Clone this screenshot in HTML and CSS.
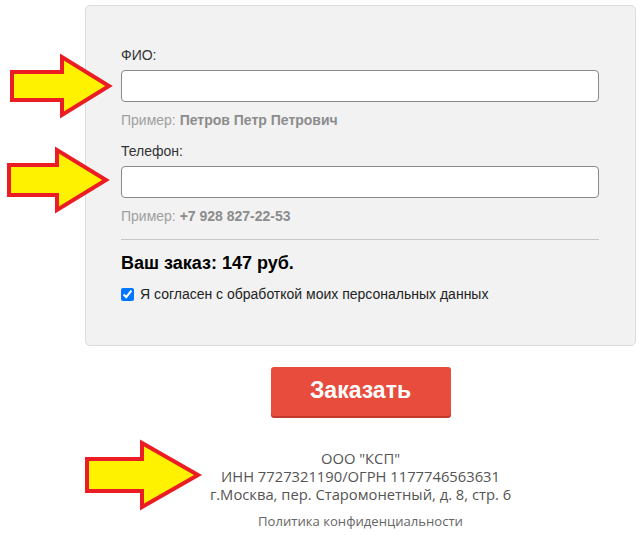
FILE: index.html
```html
<!DOCTYPE html>
<html lang="ru">
<head>
<meta charset="utf-8">
<title>Заказ</title>
<link rel="stylesheet" href="styles.css">
</head>
<body>
<div class="page">
  <form class="card">
    <label class="label" for="fio">ФИО:</label>
    <input class="field" id="fio" type="text">
    <div class="hint">Пример: <b>Петров Петр Петрович</b></div>
    <label class="label label-next" for="tel">Телефон:</label>
    <input class="field" id="tel" type="text">
    <div class="hint">Пример: <b>+7 928 827-22-53</b></div>
    <hr class="sep">
    <div class="total">Ваш заказ: 147 руб.</div>
    <label class="agree"><input type="checkbox" class="check" checked> Я согласен с обработкой моих персональных данных</label>
  </form>
  <div class="actions">
    <button class="order" type="button">Заказать</button>
  </div>
  <div class="company">
    <div>ООО "КСП"</div>
    <div>ИНН 7727321190/ОГРН 1177746563631</div>
    <div>г.Москва, пер. Старомонетный, д. 8, стр. 6</div>
  </div>
  <div class="policy">Политика конфиденциальности</div>
</div>
<svg class="arrows" width="640" height="535" viewBox="0 0 640 535">
  <polygon points="12,72 62,72 62,57 109,86 62,115 62,100 12,100"/>
  <polygon points="9,165 57,165 57,150 106,180 57,210 57,195 9,195"/>
  <polygon points="87,459 142,459 142,443 198,475 142,507 142,491 87,491"/>
</svg>
</body>
</html>
```
FILE: styles.css
```css
html, body {
  margin: 0;
  padding: 0;
  background: #fff;
}
body {
  font-family: "Liberation Sans", Arial, sans-serif;
  color: #333;
  width: 640px;
  height: 535px;
  overflow: hidden;
  position: relative;
}
.page {
  margin-left: 85px;
  width: 551px;
  padding-top: 5px;
}
.card {
  display: flex;
  flex-direction: column;
  background: #f2f2f2;
  border: 1px solid #dcdcdc;
  border-radius: 5px;
  padding: 41px 36px 43px 35px;
}
.label {
  font-size: 14px;
  line-height: 16px;
  color: #333;
  margin-bottom: 7px;
}
.label-next {
  margin-top: 15px;
}
.field {
  box-sizing: border-box;
  width: 478px;
  height: 32px;
  margin: 0;
  border: 1px solid #8a8a8a;
  border-radius: 4px;
  background: #fff;
  padding: 0 8px;
  font: 14px "Liberation Sans", Arial, sans-serif;
}
.hint {
  margin-top: 10px;
  font-size: 14px;
  line-height: 16px;
  color: #a0a0a0;
}
.hint b {
  color: #8c8c8c;
}
.sep {
  width: 478px;
  margin: 15px 0 0 0;
  border: 0;
  border-top: 1px solid #c8c8c8;
  height: 0;
}
.total {
  margin-top: 13px;
  font-size: 18px;
  line-height: 21px;
  font-weight: bold;
  color: #000;
}
.agree {
  margin-top: 12px;
  display: flex;
  align-items: center;
  font-size: 14px;
  line-height: 16px;
  color: #222;
}
.check {
  width: 13px;
  height: 13px;
  margin: 0 6px 0 0;
  accent-color: #0075ff;
}
.actions {
  display: flex;
  justify-content: center;
  margin-top: 21px;
}
.order {
  width: 180px;
  height: 49px;
  border: 0;
  border-radius: 3px;
  background: #e74c3c;
  box-shadow: 0 2px 0 #c0392b;
  color: #fff;
  font: bold 23px "Liberation Sans", Arial, sans-serif;
  padding: 0 0 2px 0;
}
.company {
  margin-top: 33px;
  text-align: center;
  font-family: "Open Sans", "DejaVu Sans", sans-serif;
  font-size: 14.75px;
  line-height: 18px;
  color: #555;
}
.policy {
  margin-top: 10px;
  text-align: center;
  font-family: "Open Sans", "DejaVu Sans", sans-serif;
  font-size: 13.1px;
  line-height: 16px;
  color: #666;
}
.arrows {
  position: absolute;
  left: 0;
  top: 0;
  pointer-events: none;
}
.arrows polygon {
  fill: #fff200;
  stroke: #ec1c24;
  stroke-width: 4;
  stroke-linejoin: miter;
}
```
